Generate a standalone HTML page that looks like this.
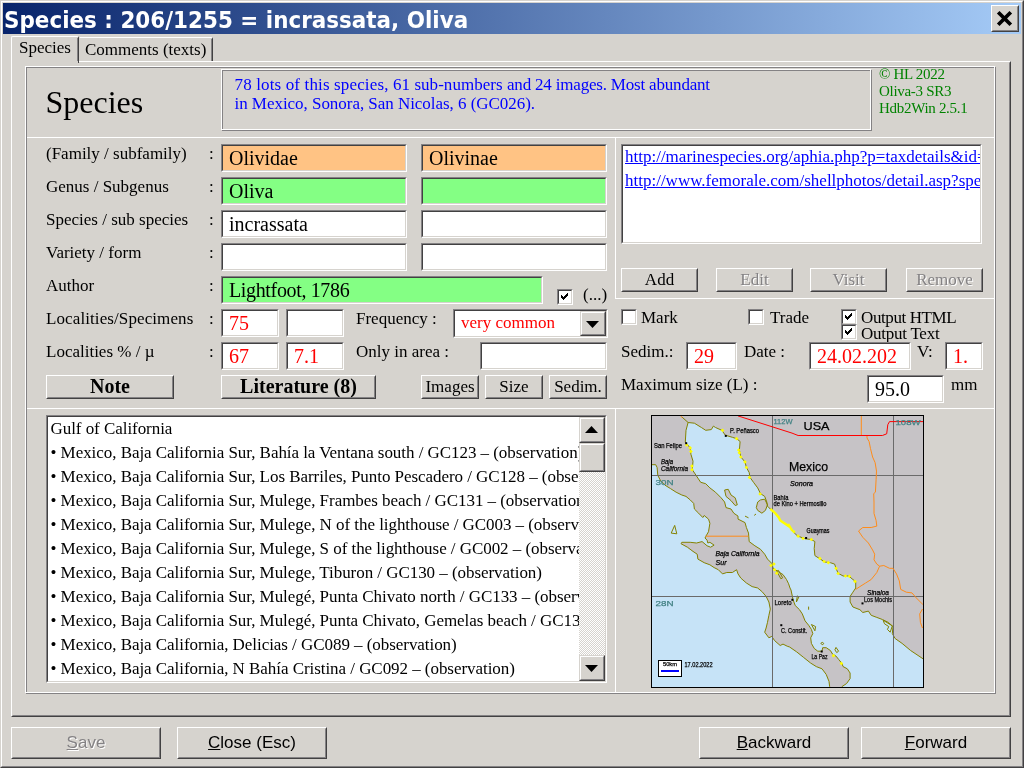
<!DOCTYPE html>
<html><head><meta charset="utf-8"><title>Species</title>
<style>
*{box-sizing:border-box;margin:0;padding:0}
html,body{width:1024px;height:768px;overflow:hidden;background:#d6d3ce}
body{position:relative;opacity:.999;font-family:"Liberation Serif",serif;font-size:17px;color:#000;line-height:1}
.a{position:absolute;white-space:pre}
/* window frame */
#win{left:0;top:0;width:1024px;height:768px;border-top:1px solid #d6d3ce;border-left:1px solid #d6d3ce;border-right:1px solid #424142;border-bottom:1px solid #424142}
#win2{left:1px;top:1px;width:1022px;height:766px;border-top:1px solid #fff;border-left:1px solid #fff;border-right:1px solid #848284;border-bottom:1px solid #848284}
#title{left:3px;top:3px;width:1018px;height:31px;background:linear-gradient(to right,#08246b 0%,#a5cbf7 100%)}
#ttext{left:4px;top:9px;color:#fff;font-family:"DejaVu Sans","Liberation Sans",sans-serif;font-weight:bold;font-size:22.6px;transform-origin:0 0;transform:scaleX(.9505)}
/* raised button */
.btn{background:#d6d3ce;border:1px solid;border-color:#fff #424142 #424142 #fff;text-align:center}
.btn:before{content:"";position:absolute;left:0;top:0;right:0;bottom:0;border:1px solid;border-color:#d6d3ce #848284 #848284 #d6d3ce}
.btn span{position:relative}
.sb{border-color:#d6d3ce #424142 #424142 #d6d3ce}
.sb:before{border-color:#fff #848284 #848284 #fff}
.dis{color:#848284;text-shadow:1px 1px 0 #fff}
/* sunken edit */
.ed{background:#fff;border:1px solid;border-color:#848284 #fff #fff #848284;font-size:20px}
.ed:before{content:"";position:absolute;left:0;top:0;right:0;bottom:0;border:1px solid;border-color:#424142 #d6d3ce #d6d3ce #424142}
.ed span{position:absolute;left:7px;top:3px}
.or{background:#ffc384}.gr{background:#84ff84}
.red{color:#f00}
/* bump frame : white rect offset -1,-1 and gray rect */
.fr{border:1px solid #848284}
.fr:before{content:"";position:absolute;left:-2px;top:-2px;right:0;bottom:0;border:1px solid #fff}
.hl{height:1px;background:#fff}
.vl{width:1px;background:#fff}
.sans{font-family:"Liberation Sans",sans-serif}
.cb{width:16px;height:16px;background:#fff;border:1px solid;border-color:#848284 #fff #fff #848284}
.cb:before{content:"";position:absolute;left:0;top:0;right:0;bottom:0;border:1px solid;border-color:#424142 #d6d3ce #d6d3ce #424142}
</style></head><body>
<div id="win" class="a"></div><div id="win2" class="a"></div>
<div id="title" class="a"></div>
<div id="ttext" class="a">Species : 206/1255 = incrassata, Oliva</div>
<!-- close button -->
<div class="a btn" style="left:991px;top:5px;width:28px;height:27px"></div>
<svg class="a" style="left:996px;top:10px" width="18" height="17" viewBox="996 10 18 17"><path d="M998.2 12.2 L1010.8 24.8 M1010.8 12.2 L998.2 24.8" stroke="#000" stroke-width="3.7" fill="none"/></svg>

<!-- tab page -->
<div class="a" id="tabpg" style="left:11px;top:61px;width:1000px;height:656px;border:1px solid;border-color:#fff #424142 #424142 #fff"></div>
<div class="a" style="left:12px;top:62px;width:998px;height:654px;border:1px solid;border-color:#d6d3ce #848284 #848284 #d6d3ce"></div>
<!-- tabs -->
<div class="a" id="tab1" style="left:11px;top:36px;width:68px;height:27px;background:#d6d3ce;border:1px solid;border-color:#fff #424142 transparent #fff;border-bottom:none;border-radius:2px 2px 0 0"></div>
<div class="a" style="left:77px;top:38px;width:1px;height:23px;background:#848284"></div>
<div class="a" style="left:19px;top:39px">Species</div>
<div class="a" id="tab2" style="left:79px;top:37px;width:134px;height:24px;border:1px solid;border-color:#fff #424142 transparent #d6d3ce;border-bottom:none;border-radius:0 2px 0 0"></div>
<div class="a" style="left:211px;top:39px;width:1px;height:22px;background:#848284"></div>
<div class="a" style="left:85px;top:41px">Comments (texts)</div>

<!-- inner panel frame -->
<div class="a fr" style="left:26px;top:67px;width:970px;height:627px"></div>

<!-- header -->
<div class="a" style="left:45.5px;top:86px;font-size:32px">Species</div>
<div class="a fr" style="left:222px;top:70px;width:650px;height:61px"></div>
<div class="a" style="left:234.5px;top:75px;color:#00f;line-height:19px;letter-spacing:.144px">78 lots of this species, </div>
<div class="a" style="left:393px;top:75px;color:#00f;line-height:19px;letter-spacing:.047px">61 sub-numbers </div>
<div class="a" style="left:507px;top:75px;color:#00f;line-height:19px;letter-spacing:-.19px">and 24 images. Most abundant</div>
<div class="a" style="left:234.5px;top:94px;color:#00f;line-height:19px;letter-spacing:-.04px">in Mexico, Sonora, San Nicolas, 6 (GC026).</div>
<div class="a" style="left:879px;top:66px;color:#008200;font-size:15px;line-height:17px;letter-spacing:-.3px">© HL 2022
Oliva-3 SR3
Hdb2Win 2.5.1</div>
<!-- separators -->
<div class="a hl" style="left:27px;top:137px;width:967px"></div>
<div class="a vl" style="left:615px;top:137px;height:162px"></div>
<div class="a vl" style="left:615px;top:408px;height:284px"></div>
<div class="a hl" style="left:615px;top:298px;width:379px"></div>
<div class="a hl" style="left:27px;top:408px;width:967px"></div>

<!-- labels left -->
<div class="a" style="left:46px;top:145px">(Family / subfamily)</div><div class="a" style="left:209px;top:145px">:</div>
<div class="a" style="left:46px;top:178px">Genus / Subgenus</div><div class="a" style="left:209px;top:178px">:</div>
<div class="a" style="left:46px;top:211px">Species / sub species</div><div class="a" style="left:209px;top:211px">:</div>
<div class="a" style="left:46px;top:244px">Variety / form</div><div class="a" style="left:209px;top:244px">:</div>
<div class="a" style="left:46px;top:277px">Author</div><div class="a" style="left:209px;top:277px">:</div>
<div class="a" style="left:46px;top:310px;letter-spacing:.1px">Localities/Specimens</div><div class="a" style="left:209px;top:310px">:</div>
<div class="a" style="left:46px;top:343px">Localities % / µ</div><div class="a" style="left:209px;top:343px">:</div>

<!-- fields -->
<div class="a ed or" style="left:221px;top:144px;width:186px;height:28px"><span>Olividae</span></div>
<div class="a ed or" style="left:421px;top:144px;width:186px;height:28px"><span>Olivinae</span></div>
<div class="a ed gr" style="left:221px;top:177px;width:186px;height:28px"><span>Oliva</span></div>
<div class="a ed gr" style="left:421px;top:177px;width:186px;height:28px"></div>
<div class="a ed" style="left:221px;top:210px;width:186px;height:28px"><span>incrassata</span></div>
<div class="a ed" style="left:421px;top:210px;width:186px;height:28px"></div>
<div class="a ed" style="left:221px;top:243px;width:186px;height:28px"></div>
<div class="a ed" style="left:421px;top:243px;width:186px;height:28px"></div>
<div class="a ed gr" style="left:221px;top:276px;width:322px;height:28px"><span style="letter-spacing:-.35px">Lightfoot, 1786</span></div>
<div class="a cb" style="left:557px;top:289px"></div>
<svg class="a" style="left:561px;top:293px" width="7" height="7" viewBox="0 0 7 7" shape-rendering="crispEdges"><path d="M0 2h1v1h1v1h1v-1h1v-1h1v-1h1v-1h1v3h-1v1h-1v1h-1v1h-1v1h-1v-1h-1v-1h-1z" fill="#000"/></svg>
<div class="a" style="left:583px;top:286px">(...)</div>

<div class="a ed red" style="left:221px;top:309px;width:58px;height:28px"><span>75</span></div>
<div class="a ed" style="left:286px;top:309px;width:58px;height:28px"></div>
<div class="a" style="left:356px;top:310px">Frequency :</div>
<div class="a ed red" style="left:453px;top:309px;width:155px;height:29px;font-size:17px"><span style="top:4px">very common</span></div>
<div class="a btn sb" style="left:580px;top:311px;width:26px;height:25px"></div>
<svg class="a" style="left:586px;top:321px" width="13" height="7" viewBox="0 0 13 7"><path d="M0 0 H13 L6.5 7 Z" fill="#000"/></svg>

<div class="a ed red" style="left:221px;top:342px;width:58px;height:28px"><span>67</span></div>
<div class="a ed red" style="left:286px;top:342px;width:58px;height:28px"><span>7.1</span></div>
<div class="a" style="left:356px;top:343px">Only in area :</div>
<div class="a ed" style="left:480px;top:342px;width:127px;height:28px"></div>

<!-- buttons row -->
<div class="a btn" style="left:46px;top:375px;width:128px;height:24px;font-size:20px;font-weight:bold;line-height:21px"><span>Note</span></div>
<div class="a btn" style="left:221px;top:375px;width:155px;height:24px;font-size:20px;font-weight:bold;line-height:21px"><span>Literature (8)</span></div>
<div class="a btn" style="left:421px;top:375px;width:58px;height:24px;line-height:21px"><span>Images</span></div>
<div class="a btn" style="left:485px;top:375px;width:58px;height:24px;line-height:21px"><span>Size</span></div>
<div class="a btn" style="left:549px;top:375px;width:58px;height:24px;line-height:21px"><span>Sedim.</span></div>

<!-- url list -->
<div class="a ed" style="left:621px;top:144px;width:361px;height:100px;font-size:17px;overflow:hidden"></div>
<div class="a" style="left:625px;top:145px;width:355px;height:50px;overflow:hidden;color:#00f;text-decoration:underline;line-height:24px">http://marinespecies.org/aphia.php?p=taxdetails&amp;id=208468
http://www.femorale.com/shellphotos/detail.asp?species=incrassata</div>
<div class="a btn" style="left:621px;top:268px;width:77px;height:24px;line-height:21px"><span>Add</span></div>
<div class="a btn dis" style="left:716px;top:268px;width:77px;height:24px;line-height:21px"><span>Edit</span></div>
<div class="a btn dis" style="left:810px;top:268px;width:77px;height:24px;line-height:21px"><span>Visit</span></div>
<div class="a btn dis" style="left:906px;top:268px;width:77px;height:24px;line-height:21px"><span>Remove</span></div>

<!-- checkboxes -->
<div class="a cb" style="left:621px;top:309px"></div><div class="a" style="left:641px;top:309px">Mark</div>
<div class="a cb" style="left:748px;top:309px"></div><div class="a" style="left:770px;top:309px">Trade</div>
<div class="a cb" style="left:841px;top:309px"></div><div class="a" style="left:861px;top:309px;letter-spacing:-.4px">Output HTML</div>
<svg class="a" style="left:845px;top:313px" width="7" height="7" viewBox="0 0 7 7" shape-rendering="crispEdges"><path d="M0 2h1v1h1v1h1v-1h1v-1h1v-1h1v-1h1v3h-1v1h-1v1h-1v1h-1v1h-1v-1h-1v-1h-1z" fill="#000"/></svg>
<div class="a cb" style="left:841px;top:324px"></div><div class="a" style="left:861px;top:325px;letter-spacing:-.25px">Output Text</div>
<svg class="a" style="left:845px;top:328px" width="7" height="7" viewBox="0 0 7 7" shape-rendering="crispEdges"><path d="M0 2h1v1h1v1h1v-1h1v-1h1v-1h1v-1h1v3h-1v1h-1v1h-1v1h-1v1h-1v-1h-1v-1h-1z" fill="#000"/></svg>

<div class="a" style="left:621px;top:343px">Sedim.:</div>
<div class="a ed red" style="left:686px;top:342px;width:51px;height:28px"><span>29</span></div>
<div class="a" style="left:744px;top:343px">Date :</div>
<div class="a ed red" style="left:809px;top:342px;width:102px;height:28px;overflow:hidden"><span style="width:80px;overflow:hidden">24.02.2022</span></div>
<div class="a" style="left:917px;top:343px">V:</div>
<div class="a ed red" style="left:945px;top:342px;width:38px;height:28px;overflow:hidden"><span style="width:15px;overflow:hidden">1.0</span></div>
<div class="a" style="left:621px;top:376px">Maximum size (L) :</div>
<div class="a ed" style="left:867px;top:375px;width:77px;height:28px"><span>95.0</span></div>
<div class="a" style="left:951px;top:376px">mm</div>

<!-- locality list -->
<div class="a ed" style="left:46px;top:415px;width:561px;height:268px"></div>
<div class="a" style="left:50.5px;top:417px;width:528.5px;height:264px;overflow:hidden;line-height:24px;letter-spacing:-.05px">Gulf of California
• Mexico, Baja California Sur, Bahía la Ventana south / GC123 – (observation)
• Mexico, Baja California Sur, Los Barriles, Punto Pescadero / GC128 – (observation)
• Mexico, Baja California Sur, Mulege, Frambes beach / GC131 – (observation)
• Mexico, Baja California Sur, Mulege, N of the lighthouse / GC003 – (observation)
• Mexico, Baja California Sur, Mulege, S of the lighthouse / GC002 – (observation)
• Mexico, Baja California Sur, Mulege, Tiburon / GC130 – (observation)
• Mexico, Baja California Sur, Mulegé, Punta Chivato north / GC133 – (observation)
• Mexico, Baja California Sur, Mulegé, Punta Chivato, Gemelas beach / GC134 – (observation)
• Mexico, Baja California, Delicias / GC089 – (observation)
• Mexico, Baja California, N Bahía Cristina / GC092 – (observation)</div>
<!-- scrollbar -->
<div class="a" id="sbtrack" style="left:579px;top:417px;width:26px;height:264px;background:#fff;background-image:conic-gradient(#d6d3ce 25%,#fff 0 50%,#d6d3ce 0 75%,#fff 0);background-size:2px 2px"></div>
<div class="a btn sb" style="left:579px;top:417px;width:26px;height:26px"></div>
<svg class="a" style="left:585px;top:426px" width="13" height="7" viewBox="0 0 13 7"><path d="M0 7 H13 L6.5 0 Z" fill="#000"/></svg>
<div class="a btn sb" style="left:579px;top:443px;width:26px;height:29px"></div>
<div class="a btn sb" style="left:579px;top:655px;width:26px;height:26px"></div>
<svg class="a" style="left:585px;top:665px" width="13" height="7" viewBox="0 0 13 7"><path d="M0 0 H13 L6.5 7 Z" fill="#000"/></svg>

<!-- bottom buttons -->
<div class="a btn sans dis" style="left:11px;top:727px;width:150px;height:32px;line-height:29px"><span><u>S</u>ave</span></div>
<div class="a btn sans" style="left:177px;top:727px;width:150px;height:32px;line-height:29px"><span><u>C</u>lose (Esc)</span></div>
<div class="a btn sans" style="left:699px;top:727px;width:150px;height:32px;line-height:29px"><span><u>B</u>ackward</span></div>
<div class="a btn sans" style="left:861px;top:727px;width:150px;height:32px;line-height:29px"><span><u>F</u>orward</span></div>
<!-- map -->
<svg class="a" style="left:651px;top:415px" width="273" height="273" viewBox="651 415 273 273">
<rect x="651" y="415" width="273" height="273" fill="#c6c3c6"/>
<path d="M681.8 416.9 L688.1 422.5 L686 430.3 L685.3 442.2 L690.2 447.9 L690.9 454.2 L693 461.2 L692.3 469.7 L695.1 473.9 L697.9 478.1 L700.7 482.3 L705.7 483.7 L709.9 487.9 L715.5 492.2 L721.1 497.8 L724.6 502 L726 507.6 L731 509 L733.8 513.2 L738 516.1 L738 519.1 L745 522.6 L746.4 527.5 L748.5 533.1 L749.2 541.6 L754.9 545.8 L760.5 549.3 L764.7 554.2 L767.5 559.1 L771.8 563.4 L773.2 568.3 L777.4 571.1 L783 574.6 L786.5 579.5 L788.6 583.8 L790 588 L791 590 L793.1 599.8 L795.2 605.5 L799.5 609.7 L802.3 613.9 L805.1 620.9 L808.6 625.2 L811.4 629.4 L812.8 633.6 L810.7 637.8 L811.4 643.4 L814.2 648.4 L817.8 651.2 L822 651.2 L822.7 647.7 L826.2 647.7 L830.4 650.5 L832.5 654 L836 656.1 L838.8 659.6 L841.7 663.1 L843.1 666.6 L847.3 668.8 L850.1 673 L850.1 678.6 L846.6 683.5 L841.7 686.8 L841.7 687 L923 687 L923 658.9 L923.2 658.9 L919 656.1 L910.6 650.5 L902.1 643.4 L895.1 638.5 L892.3 633.6 L893 626.6 L888.1 622.3 L882.4 619.5 L876.8 617.4 L871.2 615.3 L868.4 611.1 L862.8 612.5 L859.9 609.7 L852.9 607 L850.1 602 L850.1 596.4 L852.9 592.2 L855.7 588 L855.7 581.6 L852.9 579.5 L848.7 576 L843.1 576 L838.1 573.2 L836 568.3 L834.6 564.1 L830.4 562.7 L824.8 562 L819.2 558.4 L814.9 555.6 L814.2 548.6 L814.9 541.6 L811.4 539.5 L805.1 538.8 L797.4 535.9 L792.4 531 L788.2 524 L788.6 526.1 L780.2 520.5 L778.8 517.5 L774.6 512.5 L770.3 509 L767.5 506.2 L766.8 502 L764.7 496.4 L760.5 493.6 L757.7 487.9 L753.5 482.3 L750 477.4 L749.2 472.5 L746.4 467.5 L745 461.9 L740.8 457 L739.4 450 L740.1 441.5 L736.6 438.7 L732.4 437.3 L725.3 435.2 L721.8 430.3 L715.5 427.5 L713.4 426.1 L711.3 429.6 L705.7 430.3 L701.4 427.5 L694.4 423.2 L688.1 422.5 Z M652 464.7 L651.9 464.7 L655.7 464.7 L657.1 467.5 L657.8 475.3 L660.7 480.9 L664.9 485.1 L670.5 488.6 L676.1 492.2 L681.8 495 L686 496.4 L690.2 499.9 L693.7 503.4 L694.4 509 L698.6 513.2 L702.8 517.5 L704.2 515.5 L708.5 519.1 L709.9 523.3 L708.5 531.7 L705.7 536.6 L705 538 L707.1 540.2 L707.8 543 L709.9 542.3 L714.1 545.1 L710.6 547.2 L707.1 545.8 L702.1 541.6 L696.5 543 L690.2 542.3 L681.8 542.3 L681 543.7 L687.4 547.2 L693 551.4 L697.2 554.2 L697.9 559.1 L704.2 562.7 L709.9 564.8 L714.1 567.6 L718.3 569.7 L722.5 573.9 L726.8 572.5 L732.4 572.5 L736.6 569.7 L738 573.9 L740.8 578.1 L746.4 583 L752.1 586.6 L757.7 588 L761.9 591.5 L766.1 596.4 L768.9 602 L770.3 609.1 L768.9 615.3 L767.5 622.3 L766.1 628 L764.7 632.2 L768.9 637.8 L771.8 636.4 L774.6 640.6 L780.2 645.5 L783 644.1 L787.2 646.2 L789.6 647 L796.7 651.9 L803.7 657.5 L810.7 663.1 L816.3 666.6 L822 668.8 L826.2 674.4 L829 681.4 L829.7 686.8 L829.7 687 L652 687 Z" fill="#c6e3f7"/>
<path d="M760.5 499.9 L764.7 499.2 L767.5 504.8 L765.4 510.4 L761.9 513.2 L757.7 510.4 L756.3 507.6 L757.7 502 Z" fill="#c6c3c6" stroke="#848200" stroke-width="1"/>
<path d="M724.6 490 L728.2 489.3 L731 495 L735.2 497.8 L737.3 504.8 L735.2 505.5 L731 500.6 L726 496.4 Z" fill="#c6c3c6" stroke="#848200" stroke-width="1"/>
<path d="M674.7 525.4 L676.8 533.8 L671.2 533.1 Z" fill="none" stroke="#848200" stroke-width="1"/>
<path d="M811.4 624.5 L815.6 626.6 L814.9 630.8 Z" fill="none" stroke="#848200" stroke-width="1"/>
<path d="M836 647.4 L838.6 651.2 L836.7 652.6 L834.9 649.8 Z" fill="none" stroke="#848200" stroke-width="1"/>
<path d="M820.8 643.2 L822.7 642.3 L823.8 643.7 L822.2 644.8 Z" fill="none" stroke="#848200" stroke-width="1"/>
<path d="M883.1 620.2 L892.3 625.9 L890.2 632.2 L887.4 629.4 L888.8 626.6 L884.5 623.8 Z" fill="none" stroke="#848200" stroke-width="1"/>
<path d="M797.4 595.6 L796.4 602 L799.2 596.3 M808.6 606.6 L808.6 609.7 M745 516.1 L748.5 517.8 M754.2 515.4 L756 514" fill="none" stroke="#848200" stroke-width="1"/>
<path d="M681.8 416.9 L688.1 422.5 L686 430.3 L685.3 442.2 L690.2 447.9 L690.9 454.2 L693 461.2 L692.3 469.7 L695.1 473.9 L697.9 478.1 L700.7 482.3 L705.7 483.7 L709.9 487.9 L715.5 492.2 L721.1 497.8 L724.6 502 L726 507.6 L731 509 L733.8 513.2 L738 516.1 L738 519.1 L745 522.6 L746.4 527.5 L748.5 533.1 L749.2 541.6 L754.9 545.8 L760.5 549.3 L764.7 554.2 L767.5 559.1 L771.8 563.4 L773.2 568.3 L777.4 571.1 L783 574.6 L786.5 579.5 L788.6 583.8 L790 588 L791 590 L793.1 599.8 L795.2 605.5 L799.5 609.7 L802.3 613.9 L805.1 620.9 L808.6 625.2 L811.4 629.4 L812.8 633.6 L810.7 637.8 L811.4 643.4 L814.2 648.4 L817.8 651.2 L822 651.2 L822.7 647.7 L826.2 647.7 L830.4 650.5 L832.5 654 L836 656.1 L838.8 659.6 L841.7 663.1 L843.1 666.6 L847.3 668.8 L850.1 673 L850.1 678.6 L846.6 683.5 L841.7 686.8 M651.9 464.7 L655.7 464.7 L657.1 467.5 L657.8 475.3 L660.7 480.9 L664.9 485.1 L670.5 488.6 L676.1 492.2 L681.8 495 L686 496.4 L690.2 499.9 L693.7 503.4 L694.4 509 L698.6 513.2 L702.8 517.5 L704.2 515.5 L708.5 519.1 L709.9 523.3 L708.5 531.7 L705.7 536.6 L705 538 L707.1 540.2 L707.8 543 L709.9 542.3 L714.1 545.1 L710.6 547.2 L707.1 545.8 L702.1 541.6 L696.5 543 L690.2 542.3 L681.8 542.3 L681 543.7 L687.4 547.2 L693 551.4 L697.2 554.2 L697.9 559.1 L704.2 562.7 L709.9 564.8 L714.1 567.6 L718.3 569.7 L722.5 573.9 L726.8 572.5 L732.4 572.5 L736.6 569.7 L738 573.9 L740.8 578.1 L746.4 583 L752.1 586.6 L757.7 588 L761.9 591.5 L766.1 596.4 L768.9 602 L770.3 609.1 L768.9 615.3 L767.5 622.3 L766.1 628 L764.7 632.2 L768.9 637.8 L771.8 636.4 L774.6 640.6 L780.2 645.5 L783 644.1 L787.2 646.2 L789.6 647 L796.7 651.9 L803.7 657.5 L810.7 663.1 L816.3 666.6 L822 668.8 L826.2 674.4 L829 681.4 L829.7 686.8 M688.1 422.5 L694.4 423.2 L701.4 427.5 L705.7 430.3 L711.3 429.6 L713.4 426.1 L715.5 427.5 L721.8 430.3 L725.3 435.2 L732.4 437.3 L736.6 438.7 L740.1 441.5 L739.4 450 L740.8 457 L745 461.9 L746.4 467.5 L749.2 472.5 L750 477.4 L753.5 482.3 L757.7 487.9 L760.5 493.6 L764.7 496.4 L766.8 502 L767.5 506.2 L770.3 509 L774.6 512.5 L778.8 517.5 L780.2 520.5 L788.6 526.1 L788.2 524 L792.4 531 L797.4 535.9 L805.1 538.8 L811.4 539.5 L814.9 541.6 L814.2 548.6 L814.9 555.6 L819.2 558.4 L824.8 562 L830.4 562.7 L834.6 564.1 L836 568.3 L838.1 573.2 L843.1 576 L848.7 576 L852.9 579.5 L855.7 581.6 L855.7 588 L852.9 592.2 L850.1 596.4 L850.1 602 L852.9 607 L859.9 609.7 L862.8 612.5 L868.4 611.1 L871.2 615.3 L876.8 617.4 L882.4 619.5 L888.1 622.3 L893 626.6 L892.3 633.6 L895.1 638.5 L902.1 643.4 L910.6 650.5 L919 656.1 L923.2 658.9 M776.7 571.1 L780.9 578.8 L782.6 577.8 L778.5 570.4 Z" fill="none" stroke="#848200" stroke-width="1"/>
<path d="M772.5 416 V687 M893.5 416 V687 M652 475.5 H923 M652 596.5 H923" stroke="#6a6a6a" stroke-width="1" fill="none"/>
<path d="M861.3 415.9 L861.3 435.2 M867 435.5 L867 438 L869.1 441.5 L870.5 448.6 L872.6 457 L875.1 462.6 L876.5 471.1 L876.1 479.5 L875.4 492.2 L873.7 493.6 L874 502 L874 513.4 L876.1 520.5 L876.8 526.1 L871.2 527.5 L862.8 527.5 L858.5 531 L862.8 537.3 L868.4 543 L872.6 550 L874.7 554.2 L874 559.8 L876.8 564.1 L879.6 566.2 M879.6 566.2 L876.8 572.5 L871.2 579.5 L865.6 583 L859.9 586.6 L855.7 589.4 M879.6 566.2 L883.8 565.5 L889.5 568.3 L893 568.3 L896.5 573.9 L899.3 580.9 L900.7 589.4 L906.3 592.2 L912 592.9 L916.2 597.8 L920.4 602 L923.2 604.8 M922.5 609 L919.7 613.9 L920.4 622.3 L922.5 628 M705.6 536.2 L748.5 536.2 M680.6 416.2 L682.5 417.6" fill="none" stroke="#ff8c1a" stroke-width="1"/>
<path d="M738 415.9 L792 433.1 L798.1 435.5 L882.4 435.5 L886.7 433.8 L887.8 424.7 L889.5 421.6 L923.2 421.6" fill="none" stroke="#f00" stroke-width="1"/>
<path d="M770.3 509 L774.6 512.5 L778.8 517.5 L780.2 520.5 L788.6 526.1 L788.2 524 L792.4 531" fill="none" stroke="#ff0" stroke-width="2.4"/>
<g fill="#ff0"><rect x="721.2" y="429" width="2.6" height="2.6" transform="rotate(45 722.5 430.3)"/><rect x="735.3" y="437.4" width="2.6" height="2.6" transform="rotate(45 736.6 438.7)"/><rect x="737.4" y="448.7" width="2.6" height="2.6" transform="rotate(45 738.7 450)"/><rect x="738.1" y="451.5" width="2.6" height="2.6" transform="rotate(45 739.4 452.8)"/><rect x="739.5" y="455.7" width="2.6" height="2.6" transform="rotate(45 740.8 457)"/><rect x="743.7" y="460.6" width="2.6" height="2.6" transform="rotate(45 745 461.9)"/><rect x="745.1" y="466.2" width="2.6" height="2.6" transform="rotate(45 746.4 467.5)"/><rect x="748.2" y="476.1" width="2.6" height="2.6" transform="rotate(45 749.5 477.4)"/><rect x="758.8" y="492.7" width="2.6" height="2.6" transform="rotate(45 760.1 494)"/><rect x="685.4" y="443.7" width="2.6" height="2.6" transform="rotate(45 686.7 445)"/><rect x="688.9" y="446.6" width="2.6" height="2.6" transform="rotate(45 690.2 447.9)"/><rect x="689.6" y="450.1" width="2.6" height="2.6" transform="rotate(45 690.9 451.4)"/><rect x="690.7" y="464.8" width="2.6" height="2.6" transform="rotate(45 692 466.1)"/><rect x="690.7" y="468.4" width="2.6" height="2.6" transform="rotate(45 692 469.7)"/><rect x="769.7" y="564.2" width="2.6" height="2.6" transform="rotate(45 771 565.5)"/><rect x="772.6" y="562.8" width="2.6" height="2.6" transform="rotate(45 773.9 564.1)"/><rect x="773.3" y="568.4" width="2.6" height="2.6" transform="rotate(45 774.6 569.7)"/><rect x="775.4" y="571.9" width="2.6" height="2.6" transform="rotate(45 776.7 573.2)"/><rect x="792.5" y="530.4" width="2.6" height="2.6" transform="rotate(45 793.8 531.7)"/><rect x="796.8" y="534.9" width="2.6" height="2.6" transform="rotate(45 798.1 536.2)"/><rect x="801.7" y="537.2" width="2.6" height="2.6" transform="rotate(45 803 538.5)"/><rect x="810.1" y="538.2" width="2.6" height="2.6" transform="rotate(45 811.4 539.5)"/><rect x="818.6" y="557.1" width="2.6" height="2.6" transform="rotate(45 819.9 558.4)"/><rect x="822.8" y="560.2" width="2.6" height="2.6" transform="rotate(45 824.1 561.5)"/><rect x="827" y="561.4" width="2.6" height="2.6" transform="rotate(45 828.3 562.7)"/><rect x="834.7" y="567" width="2.6" height="2.6" transform="rotate(45 836 568.3)"/><rect x="836.8" y="572.2" width="2.6" height="2.6" transform="rotate(45 838.1 573.5)"/><rect x="844.2" y="574.7" width="2.6" height="2.6" transform="rotate(45 845.5 576)"/><rect x="848.1" y="575" width="2.6" height="2.6" transform="rotate(45 849.4 576.3)"/><rect x="853.7" y="580.1" width="2.6" height="2.6" transform="rotate(45 855 581.4)"/><rect x="832.2" y="654.4" width="2.6" height="2.6" transform="rotate(45 833.5 655.7)"/><rect x="840.1" y="662.1" width="2.6" height="2.6" transform="rotate(45 841.4 663.4)"/></g>
<g fill="#000"><rect x="685.2" y="442.2" width="2" height="2"/><rect x="724.8" y="434.9" width="2" height="2"/><rect x="805.1" y="537" width="2" height="2"/><rect x="791.4" y="598.8" width="2" height="2"/><rect x="820.7" y="650.5" width="2" height="2"/><rect x="861.5" y="602.4" width="2" height="2"/><rect x="780.3" y="624.2" width="2" height="2"/></g>
<rect x="658.5" y="660.5" width="23" height="16" fill="#fff" stroke="#000"/>
<path d="M661 671 H679" stroke="#00f" stroke-width="2"/>
<text x="803.5" y="429.5" font-family="Liberation Sans, sans-serif" font-size="11.5" textLength="26" lengthAdjust="spacingAndGlyphs" fill="#000" stroke="#000" stroke-width=".25" >USA</text>
<text x="789" y="471" font-family="Liberation Sans, sans-serif" font-size="12.5" textLength="39" lengthAdjust="spacingAndGlyphs" fill="#000" stroke="#000" stroke-width=".25" >Mexico</text>
<text x="773.5" y="424" font-family="Liberation Sans, sans-serif" font-size="8" textLength="19" lengthAdjust="spacingAndGlyphs" fill="#428284" stroke="#428284" stroke-width=".25" >112W</text>
<text x="895.5" y="424.5" font-family="Liberation Sans, sans-serif" font-size="8" textLength="25" lengthAdjust="spacingAndGlyphs" fill="#428284" stroke="#428284" stroke-width=".25" >108W</text>
<text x="655.5" y="485" font-family="Liberation Sans, sans-serif" font-size="8" textLength="18" lengthAdjust="spacingAndGlyphs" fill="#428284" stroke="#428284" stroke-width=".25" >30N</text>
<text x="655.5" y="605.5" font-family="Liberation Sans, sans-serif" font-size="8" textLength="18" lengthAdjust="spacingAndGlyphs" fill="#428284" stroke="#428284" stroke-width=".25" >28N</text>
<text x="730" y="433" font-family="Liberation Sans, sans-serif" font-size="7" textLength="29" lengthAdjust="spacingAndGlyphs" fill="#000" stroke="#000" stroke-width=".25" >P. Peñasco</text>
<text x="654" y="447.5" font-family="Liberation Sans, sans-serif" font-size="7" textLength="28" lengthAdjust="spacingAndGlyphs" fill="#000" stroke="#000" stroke-width=".25" >San Felipe</text>
<text x="661" y="464" font-family="Liberation Sans, sans-serif" font-size="7" textLength="12" lengthAdjust="spacingAndGlyphs" fill="#000" stroke="#000" stroke-width=".25" font-style="italic">Baja</text>
<text x="661" y="471" font-family="Liberation Sans, sans-serif" font-size="7" textLength="27" lengthAdjust="spacingAndGlyphs" fill="#000" stroke="#000" stroke-width=".25" font-style="italic">California</text>
<text x="790" y="486" font-family="Liberation Sans, sans-serif" font-size="7" textLength="23" lengthAdjust="spacingAndGlyphs" fill="#000" stroke="#000" stroke-width=".25" font-style="italic">Sonora</text>
<text x="773.5" y="499.5" font-family="Liberation Sans, sans-serif" font-size="7" textLength="15" lengthAdjust="spacingAndGlyphs" fill="#000" stroke="#000" stroke-width=".25" >Bahía</text>
<text x="773.5" y="506" font-family="Liberation Sans, sans-serif" font-size="7" textLength="53" lengthAdjust="spacingAndGlyphs" fill="#000" stroke="#000" stroke-width=".25" >de Kino + Hermosillo</text>
<text x="806.5" y="533" font-family="Liberation Sans, sans-serif" font-size="7" textLength="23" lengthAdjust="spacingAndGlyphs" fill="#000" stroke="#000" stroke-width=".25" >Guaymas</text>
<text x="715.5" y="556" font-family="Liberation Sans, sans-serif" font-size="7" textLength="44" lengthAdjust="spacingAndGlyphs" fill="#000" stroke="#000" stroke-width=".25" font-style="italic">Baja California</text>
<text x="715.5" y="565" font-family="Liberation Sans, sans-serif" font-size="7" textLength="11" lengthAdjust="spacingAndGlyphs" fill="#000" stroke="#000" stroke-width=".25" font-style="italic">Sur</text>
<text x="774.5" y="604.5" font-family="Liberation Sans, sans-serif" font-size="7" textLength="17" lengthAdjust="spacingAndGlyphs" fill="#000" stroke="#000" stroke-width=".25" >Loreto</text>
<text x="867" y="595" font-family="Liberation Sans, sans-serif" font-size="7" textLength="22" lengthAdjust="spacingAndGlyphs" fill="#000" stroke="#000" stroke-width=".25" font-style="italic">Sinaloa</text>
<text x="864" y="601.5" font-family="Liberation Sans, sans-serif" font-size="7" textLength="28" lengthAdjust="spacingAndGlyphs" fill="#000" stroke="#000" stroke-width=".25" >Los Mochis</text>
<text x="781" y="633" font-family="Liberation Sans, sans-serif" font-size="7" textLength="26" lengthAdjust="spacingAndGlyphs" fill="#000" stroke="#000" stroke-width=".25" >C. Constit.</text>
<text x="811.5" y="659" font-family="Liberation Sans, sans-serif" font-size="7" textLength="16" lengthAdjust="spacingAndGlyphs" fill="#000" stroke="#000" stroke-width=".25" >La Paz</text>
<text x="663" y="666" font-family="Liberation Sans, sans-serif" font-size="6" textLength="14" lengthAdjust="spacingAndGlyphs" fill="#000" stroke="#000" stroke-width=".25" >50km</text>
<text x="684.5" y="667" font-family="Liberation Sans, sans-serif" font-size="7" textLength="28" lengthAdjust="spacingAndGlyphs" fill="#000" stroke="#000" stroke-width=".25" >17.02.2022</text>
<rect x="651.5" y="415.5" width="272" height="272" fill="none" stroke="#000" stroke-width="1"/>
</svg>
<!-- /map -->
</body></html>
